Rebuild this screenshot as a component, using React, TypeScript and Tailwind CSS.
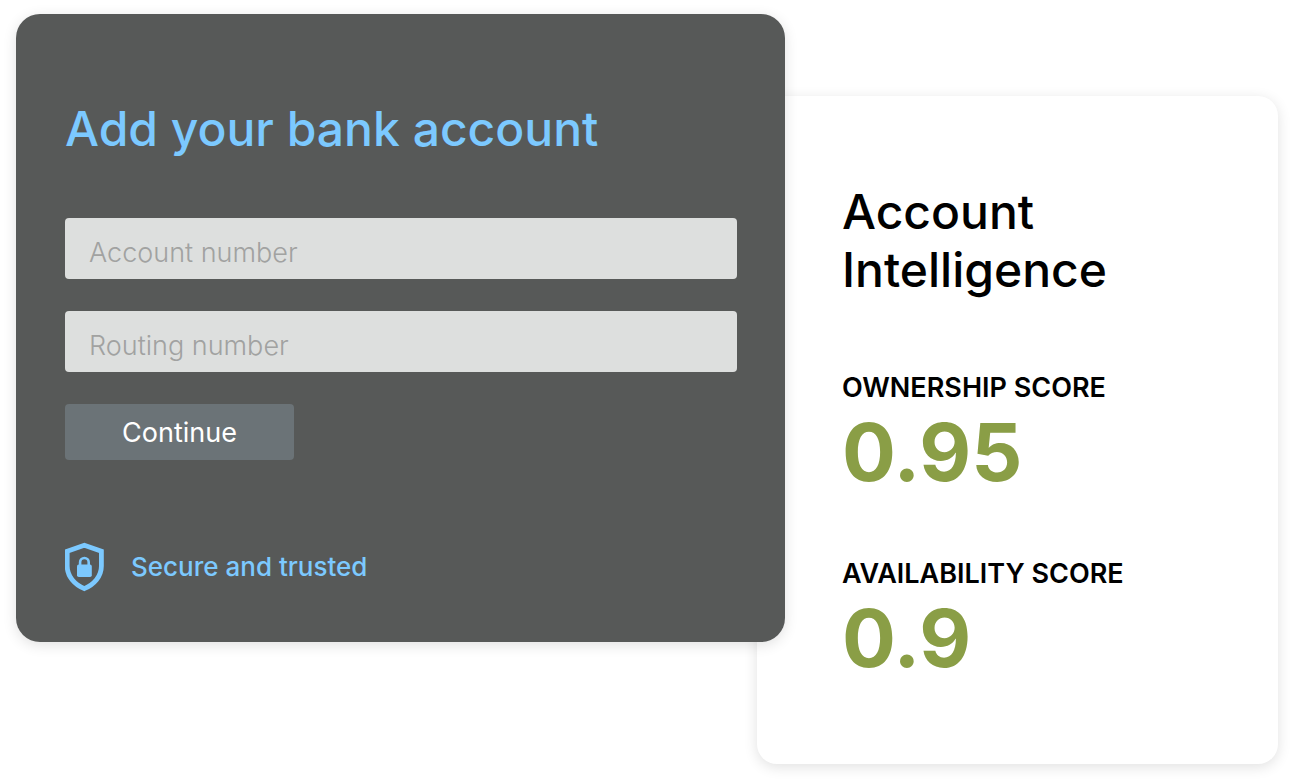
import type { ReactNode } from "react";

function ShieldLock() {
  return (
    <svg
      className="h-[50px] w-10 shrink-0"
      viewBox="0 0 40 50"
      fill="none"
      aria-hidden="true"
    >
      <path
        d="M19.300 3.200 36.400 9.200V24C36.400 34.500 29 42.500 19.300 46.600 9.700 42.500 2.200 34.500 2.200 24V9.200Z"
        stroke="#7cc9ff"
        strokeWidth="4.800"
      />
      <rect x="12" y="22.600" width="14.800" height="12.400" rx="1.800" fill="#7cc9ff" />
      <path
        d="M15.100 24V20.300a4.300 4.300 0 0 1 8.600 0V24"
        stroke="#7cc9ff"
        strokeWidth="2.600"
      />
    </svg>
  );
}

function Field({ name, label }: { name: string; label: string }) {
  return (
    <input
      name={name}
      type="text"
      aria-label={label}
      placeholder={label}
      className="block h-[61px] w-full rounded-[4px] bg-[#dddfde] px-6 pt-2 text-[27px] font-light text-[#333] outline-none placeholder:text-[#a1a2a1]"
    />
  );
}

function Score({ label, children }: { label: string; children: ReactNode }) {
  return (
    <div>
      <dt className="text-[27px] leading-8 font-semibold text-black">{label}</dt>
      <dd className="text-[80px] leading-[96px] font-bold text-[#8a9e46]">{children}</dd>
    </div>
  );
}

export default function App() {
  return (
    <main className="grid min-h-screen grid-cols-[minmax(0,741fr)_minmax(0,521fr)] items-start bg-white pt-[14px] pr-3 pb-5 pl-4 font-['Inter','Liberation_Sans',sans-serif]">
      <section className="relative z-10 -mr-7 rounded-3xl bg-[#575958] pt-[86px] pr-12 pb-[50px] pl-[49px] shadow-[0_3px_14px_rgba(0,0,0,0.12)]">
        <h1 className="text-[48px] leading-[58px] font-medium text-[#7cc9ff]">
          Add your bank account
        </h1>
        <form className="mt-[60px] flex flex-col gap-8" onSubmit={(e) => e.preventDefault()}>
          <Field name="account-number" label="Account number" />
          <Field name="routing-number" label="Routing number" />
          <button
            type="submit"
            className="h-[56px] w-[229px] rounded-[4px] bg-[#6b7377] pt-[2px] text-[27px] text-white"
          >
            Continue
          </button>
        </form>
        <div className="mt-[82px] flex items-center gap-[26px]">
          <ShieldLock />
          <p className="text-[26px] leading-8 font-medium text-[#7cc9ff]">Secure and trusted</p>
        </div>
      </section>

      <section className="mt-[82px] rounded-[20px] bg-white pt-[87px] pr-10 pb-[78px] pl-[85px] shadow-[0_3px_14px_rgba(0,0,0,0.12)]">
        <h2 className="text-[48px] leading-[58px] font-medium text-black">
          Account
          <br />
          Intelligence
        </h2>
        <dl className="mt-[73px] flex flex-col gap-[58px]">
          <Score label="OWNERSHIP SCORE">0.95</Score>
          <Score label="AVAILABILITY SCORE">0.9</Score>
        </dl>
      </section>
    </main>
  );
}
